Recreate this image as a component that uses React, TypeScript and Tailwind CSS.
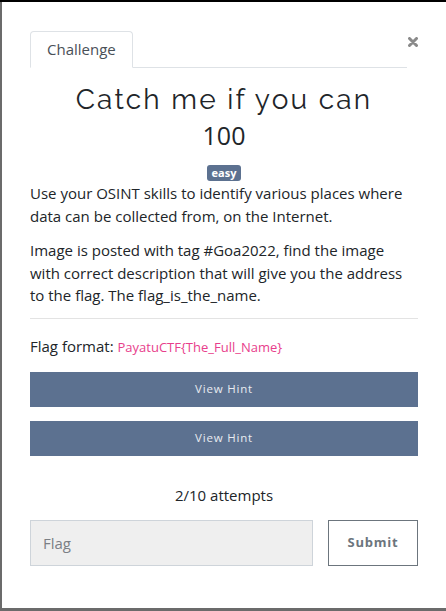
export default function App() {
  return (
    <div className="flex h-[611px] w-[446px] flex-col overflow-hidden bg-white font-['Open_Sans',sans-serif] text-[#212529]">
      <div className="h-[2px] w-full bg-black" />
      <div className="flex flex-1 flex-col border-b-[3px] border-l-2 border-[#6b6b6b] pl-[28px] pr-[28px]">
        <div className="mt-[29px] flex items-start">
          <div className="flex flex-1 border-b border-[#dee2e6]">
            <div className="-mb-px rounded-t border border-b-white border-[#dee2e6] bg-white px-[16px] py-[7px] text-[15px] leading-[21px] text-[#495057]">
              Challenge
            </div>
          </div>
          <button className="ml-[1px] mt-[6px] flex h-[10px] w-[10px] items-center justify-center">
            <svg viewBox="0 0 10 10" className="h-[10px] w-[10px]">
              <path d="M1.5 1.5 L8.5 8.5 M8.5 1.5 L1.5 8.5" stroke="#8a8a8a" strokeWidth="3" strokeLinecap="round" />
            </svg>
          </button>
        </div>
        <h1 className="mt-[14px] text-center font-['Raleway','Lato',sans-serif] text-[28px] leading-[36px] tracking-[2.2px] text-[#212529]">
          Catch me if you can
        </h1>
        <div className="mt-[1px] text-center text-[25px] font-medium leading-[32px]">100</div>
        <div className="mt-[14px] flex justify-center">
          <span className="rounded-[3px] bg-[#5c7190] px-[5px] text-[11px] font-bold leading-[16px] text-white">easy</span>
        </div>
        <p className="mt-[1px] text-[15px] leading-[22.5px]">
          Use your OSINT skills to identify various places where data can be collected from, on the Internet.
        </p>
        <p className="mt-[12px] text-[15px] leading-[22.5px]">
          Image is posted with tag #Goa2022, find the image
          <br />
          with correct description that will give you the address
          <br />
          to the flag. The flag_is_the_name.
        </p>
        <hr className="mt-[11px] border-[#e3e3e3]" />
        <div className="mt-[16px] text-[15px] leading-[22px]">
          Flag format: <code className="font-['Open_Sans',sans-serif] text-[13px] text-[#e83e8c]">PayatuCTF{"{The_Full_Name}"}</code>
        </div>
        <button className="mt-[14px] h-[35px] w-full bg-[#5c7190] text-[11.5px] tracking-[0.8px] text-[#e8ebf0]">View Hint</button>
        <button className="mt-[14px] h-[35px] w-full bg-[#5c7190] text-[11.5px] tracking-[0.8px] text-[#e8ebf0]">View Hint</button>
        <div className="mt-[28px] text-center text-[15px] leading-[22px]">2/10 attempts</div>
        <div className="mt-[14px] flex gap-[15px]">
          <input
            className="h-[46px] flex-1 border border-[#ced4da] bg-[#efefef] px-[12px] text-[15px] text-[#495057] outline-none placeholder:text-[#7b7f85]"
            placeholder="Flag"
          />
          <button className="h-[46px] w-[90px] border border-[#6c757d] bg-white text-[13px] font-bold tracking-[0.8px] text-[#6c757d]">
            Submit
          </button>
        </div>
      </div>
    </div>
  );
}
